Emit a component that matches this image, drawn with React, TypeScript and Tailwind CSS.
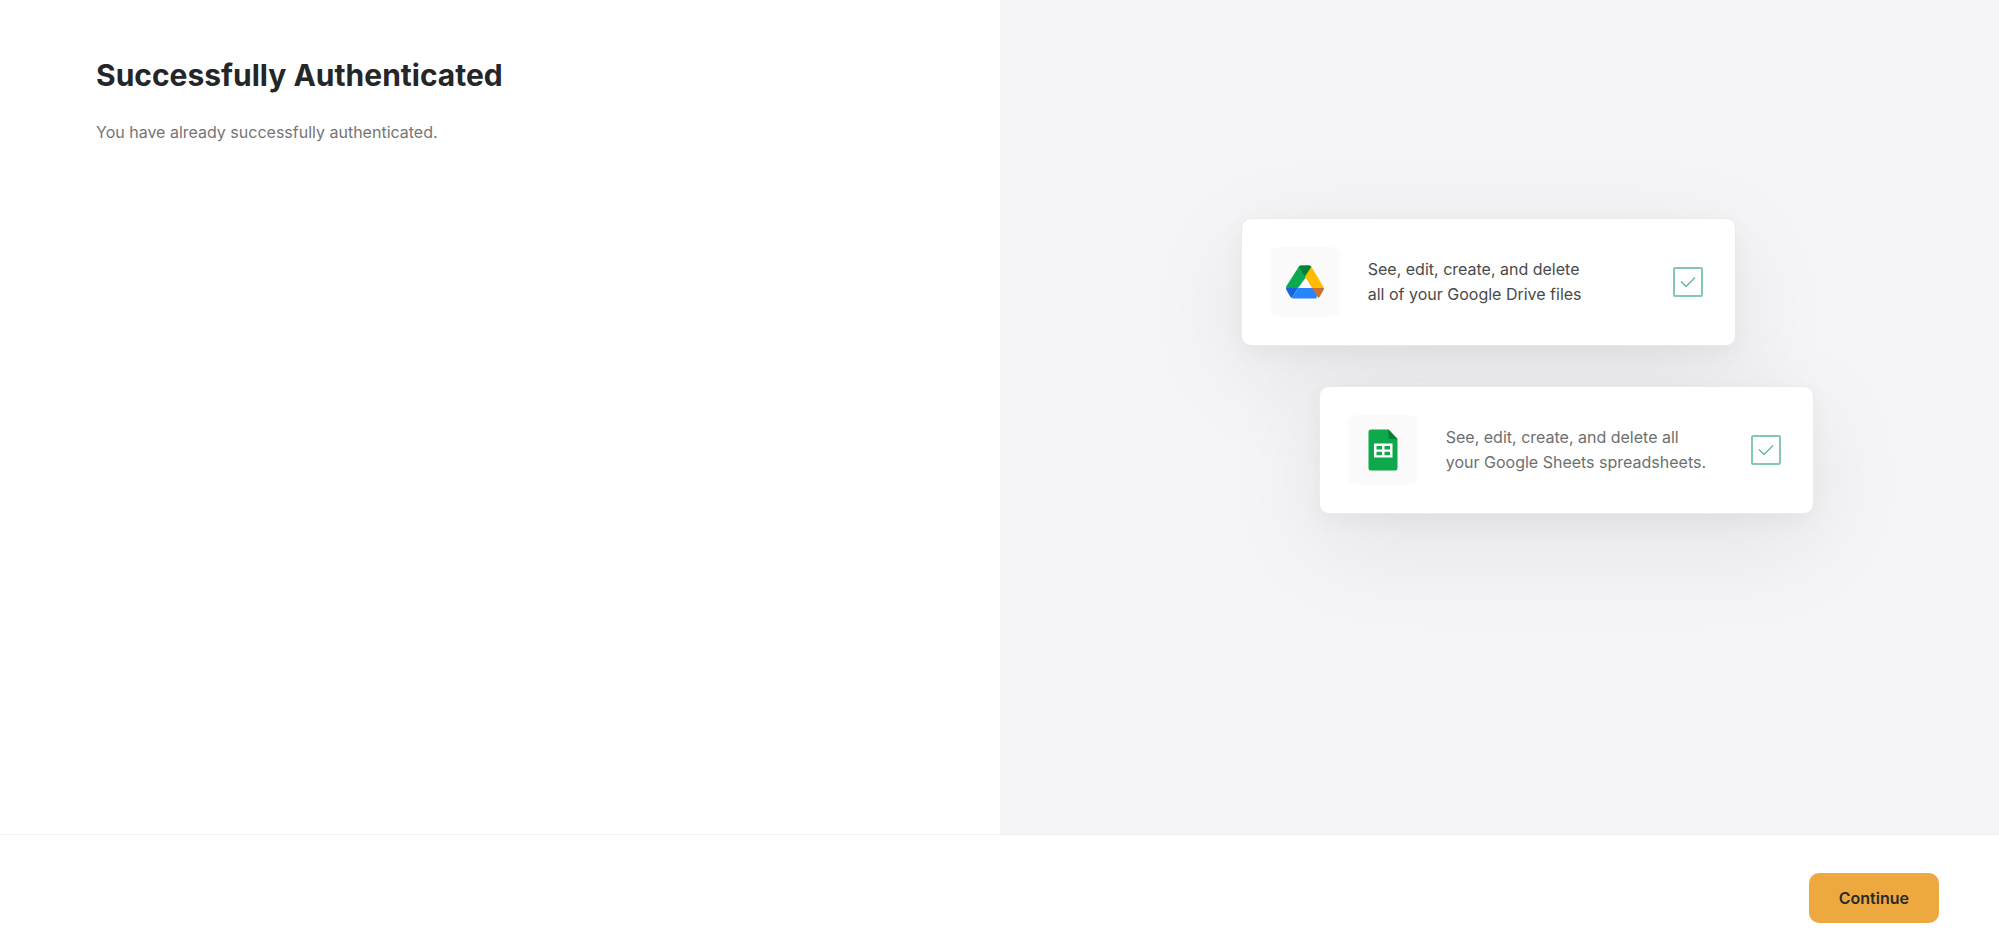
import React, { useState } from "react";

interface PermissionCardProps {
  id: string;
  icon: React.ReactNode;
  lines: [string, string];
  className?: string;
  textClassName: string;
}

function DriveIcon() {
  return (
    <svg viewBox="0 0 38 34" className="w-[38px] h-[34px]" aria-hidden="true">
      <path d="M15.2 0.5h8.6L26 4 12 23H0.2L0 21.8 12.6 2z" fill="#0DA950" />
      <path d="M12.6 1.8Q13.6 0.5 15 0.5h8q1.4 0 2.4 1.3L19 11.5z" fill="#078038" />
      <path d="M25.4 1.8L38 23H26L19 11.5z" fill="#FFBB00" />
      <path d="M0 23h12L5.8 33q-1-0.5-1.6-1.4L0.4 25z" fill="#1565D8" />
      <path d="M12 23h20l-1.600 10.5H8q-1.4 0-2.2-0.5z" fill="#2684FC" />
      <path d="M26 23h12l-0.4 2-3.8 6.6q-0.6 0.9-1.6 1.4z" fill="#C5713A" />
    </svg>
  );
}

function SheetsIcon() {
  return (
    <svg viewBox="0 0 30 42" className="w-[30px] h-[42px]" aria-hidden="true">
      <path d="M3 0.5h17.5L29.5 10v29a2.5 2.5 0 0 1-2.5 2.5H3A2.5 2.5 0 0 1 0.5 39V3A2.5 2.5 0 0 1 3 0.5z" fill="#0DA94B" />
      <path d="M20.5 0.5L29.5 10H23a2.5 2.5 0 0 1-2.5-2.5z" fill="#0A7D38" />
      <path
        fillRule="evenodd"
        d="M6 14.5h18.5v14H6zM8.5 17v3.5h5.5V17zM16.5 17v3.5H22V17zM8.5 22.8v3.4h5.5v-3.4zM16.5 22.8v3.4H22v-3.4z"
        fill="#fff"
      />
    </svg>
  );
}

function PermissionCard({ id, icon, lines, className = "", textClassName }: PermissionCardProps) {
  const [checked, setChecked] = useState(true);

  return (
    <div
      className={`flex w-[495px] items-center rounded-[10px] border border-[#ebebec] bg-white py-7 pl-7 pr-8 shadow-[0_8px_24px_rgba(0,0,0,0.04),0_28px_110px_rgba(0,0,0,0.08)] ${className}`}
    >
      <div className="flex h-[70px] w-[70px] shrink-0 items-center justify-center rounded-lg bg-[#fbfbfc]">{icon}</div>
      <label htmlFor={id} className={`ml-7 flex-1 whitespace-nowrap text-base leading-[25px] ${textClassName}`}>
        {lines[0]}
        <br />
        {lines[1]}
      </label>
      <div className="grid shrink-0 place-items-center">
        <input
          id={id}
          type="checkbox"
          checked={checked}
          onChange={(e) => setChecked(e.target.checked)}
          className="col-start-1 row-start-1 h-[30px] w-[30px] appearance-none rounded-[2px] border-2 border-[#84c9ab] bg-white"
        />
        {checked && (
          <svg viewBox="0 0 16 12" className="pointer-events-none col-start-1 row-start-1 h-3 w-4" aria-hidden="true">
            <path d="M1 5.5l5 5L15 1.5" fill="none" stroke="#5fb896" strokeWidth="1.3" />
          </svg>
        )}
      </div>
    </div>
  );
}

export default function App() {
  return (
    <div className="flex min-h-screen flex-col bg-white font-[Inter,sans-serif]">
      <main className="grid flex-1 grid-cols-2">
        <section className="px-24 pt-14">
          <h1 className="text-[30px] font-bold leading-[38px] text-[#242628]">Successfully Authenticated</h1>
          <p className="mt-[26px] text-base leading-6 text-[#757575]">You have already successfully authenticated.</p>
        </section>

        <section className="flex flex-col items-center justify-center overflow-hidden bg-[#f5f5f7] pb-[103px] pl-14">
          <div className="flex flex-col gap-10">
            <PermissionCard
              id="drive"
              icon={<DriveIcon />}
              lines={["See, edit, create, and delete", "all of your Google Drive files"]}
              textClassName="text-[#484a4c]"
            />
            <PermissionCard
              id="sheets"
              icon={<SheetsIcon />}
              lines={["See, edit, create, and delete all", "your Google Sheets spreadsheets."]}
              className="ml-[78px]"
              textClassName="text-[#6d6f71]"
            />
          </div>
        </section>
      </main>

      <footer className="flex justify-end border-t border-[#f1f1f2] bg-white px-15 pb-[26px] pt-[38px]">
        <button type="button" className="h-[50px] rounded-[10px] bg-[#eda93f] px-[30px] text-base font-semibold text-[#2a2a2a]">
          Continue
        </button>
      </footer>
    </div>
  );
}
